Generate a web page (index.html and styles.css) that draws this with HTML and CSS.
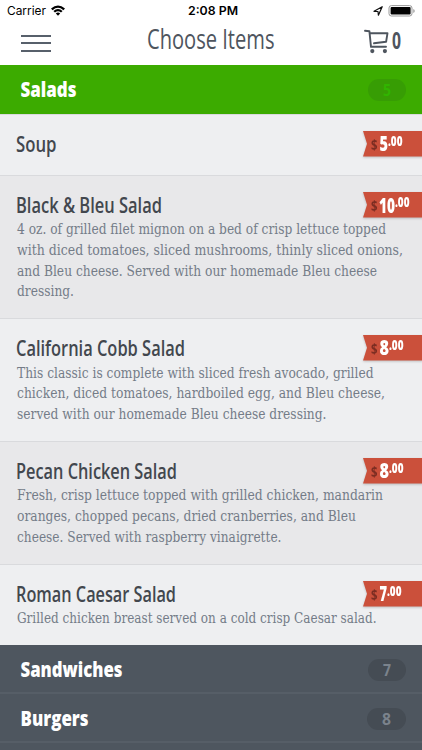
FILE: index.html
```html
<!DOCTYPE html>
<html lang="en">
<head>
<meta charset="utf-8">
<title>Choose Items</title>
<link rel="stylesheet" href="styles.css">
</head>
<body>
<header class="top">
  <div class="status">
    <div class="carrier"><svg width="47" height="20"><text x="0" y="15" textLength="39" lengthAdjust="spacingAndGlyphs">Carrier</text></svg><svg class="wifi" width="14" height="11" viewBox="0 0 14 11"><path d="M0 3.6Q7-2.8 14 3.6L12.4 5.2Q7 .4 1.6 5.2ZM2.4 6Q7 2 11.6 6L10 7.6Q7 5 4 7.6ZM4.8 8.4Q7 6.5 9.2 8.4L7 10.7Z"/></svg></div>
    <svg class="clock" width="50" height="20"><text x="0" y="15" textLength="50" lengthAdjust="spacingAndGlyphs">2:08 PM</text></svg>
    <svg class="power" width="44" height="12" viewBox="0 0 44 12"><path class="arrow" d="M1 6.3 9.2 1.7 5.4 10.2 5 6.5Z"/><rect class="shell" x="16" y=".6" width="23" height="10.4" rx="2.4"/><rect x="17.6" y="2" width="20" height="7.6" rx="1"/><path class="tip" d="M40.3 4v4q1.4-.6 1.4-2t-1.4-2z"/></svg>
  </div>
  <nav class="bar">
    <div class="menu"><i></i><i></i><i></i></div>
    <svg class="heading" width="130" height="45"><text x="0" y="29" textLength="127.5" lengthAdjust="spacingAndGlyphs">Choose Items</text></svg>
    <div class="cart"><svg width="26" height="25" viewBox="0 0 26 25"><path d="M1 1.8 5.4 2.2 7 17.8H22M6 4.2H23.5L22.1 12.8 10 14.3"/><circle cx="8.3" cy="22.1" r="2.1"/><circle cx="20.9" cy="22.1" r="2.1"/></svg><svg class="total" width="11" height="25"><text x="-1" y="19.5" textLength="9" lengthAdjust="spacingAndGlyphs">0</text></svg></div>
  </nav>
</header>
<main>
  <section class="category open"><svg width="110" height="48"><text x="-.5" y="32.3" textLength="56" lengthAdjust="spacingAndGlyphs">Salads</text></svg><span class="count"><svg width="8" height="22"><text x="0" y="16.8" textLength="8" lengthAdjust="spacingAndGlyphs">5</text></svg></span></section>
  <article class="item soup">
    <svg class="copy" width="390" height="60"><text class="name" x="-1" y="37.2" textLength="40.5" lengthAdjust="spacingAndGlyphs">Soup</text></svg>
    <svg class="price" width="60" height="28"><path d="M0 0H60V25.5H0L4 12.7Z"/><text class="sign" x="8" y="18.5" textLength="6.5" lengthAdjust="spacingAndGlyphs">$</text><text class="amount" x="16.5" y="20" textLength="8.5" lengthAdjust="spacingAndGlyphs">5</text><text class="cents" x="25" y="15" textLength="14.5" lengthAdjust="spacingAndGlyphs">.00</text></svg>
  </article>
  <article class="item alt bleu">
    <svg class="copy" width="390" height="140"><text class="name" x="-1" y="36.8" textLength="146" lengthAdjust="spacingAndGlyphs">Black &amp; Bleu Salad</text><g class="desc"><text x="0" y="58" textLength="369" lengthAdjust="spacingAndGlyphs">4 oz. of grilled filet mignon on a bed of crisp lettuce topped</text><text x="0" y="78.8" textLength="386" lengthAdjust="spacingAndGlyphs">with diced tomatoes, sliced mushrooms, thinly sliced onions,</text><text x="0" y="99.5" textLength="360" lengthAdjust="spacingAndGlyphs">and Bleu cheese. Served with our homemade Bleu cheese</text><text x="0" y="120.2" textLength="57" lengthAdjust="spacingAndGlyphs">dressing.</text></g></svg>
    <svg class="price" width="60" height="28"><path d="M0 0H60V25.5H0L4 12.7Z"/><text class="sign" x="8" y="18.5" textLength="6.5" lengthAdjust="spacingAndGlyphs">$</text><text class="amount" x="16" y="20.5" textLength="16" lengthAdjust="spacingAndGlyphs">10</text><text class="cents" x="32" y="15" textLength="14.5" lengthAdjust="spacingAndGlyphs">.00</text></svg>
  </article>
  <article class="item cobb">
    <svg class="copy" width="390" height="120"><text class="name" x="-1" y="36.8" textLength="169" lengthAdjust="spacingAndGlyphs">California Cobb Salad</text><g class="desc"><text x="0" y="58.5" textLength="356.5" lengthAdjust="spacingAndGlyphs">This classic is complete with sliced fresh avocado, grilled</text><text x="0" y="79.2" textLength="368" lengthAdjust="spacingAndGlyphs">chicken, diced tomatoes, hardboiled egg, and Bleu cheese,</text><text x="0" y="99.8" textLength="309.5" lengthAdjust="spacingAndGlyphs">served with our homemade Bleu cheese dressing.</text></g></svg>
    <svg class="price" width="60" height="28"><path d="M0 0H60V25.5H0L4 12.7Z"/><text class="sign" x="8" y="18.5" textLength="6.5" lengthAdjust="spacingAndGlyphs">$</text><text class="amount" x="16.5" y="20" textLength="9.5" lengthAdjust="spacingAndGlyphs">8</text><text class="cents" x="26" y="15" textLength="14.5" lengthAdjust="spacingAndGlyphs">.00</text></svg>
  </article>
  <article class="item alt pecan">
    <svg class="copy" width="390" height="120"><text class="name" x="-1" y="36.8" textLength="161" lengthAdjust="spacingAndGlyphs">Pecan Chicken Salad</text><g class="desc"><text x="0" y="58.3" textLength="366" lengthAdjust="spacingAndGlyphs">Fresh, crisp lettuce topped with grilled chicken, mandarin</text><text x="0" y="79" textLength="339" lengthAdjust="spacingAndGlyphs">oranges, chopped pecans, dried cranberries, and Bleu</text><text x="0" y="99.7" textLength="264.5" lengthAdjust="spacingAndGlyphs">cheese. Served with raspberry vinaigrette.</text></g></svg>
    <svg class="price" width="60" height="28"><path d="M0 0H60V25.5H0L4 12.7Z"/><text class="sign" x="8" y="18.5" textLength="6.5" lengthAdjust="spacingAndGlyphs">$</text><text class="amount" x="16.5" y="20" textLength="9.5" lengthAdjust="spacingAndGlyphs">8</text><text class="cents" x="26" y="15" textLength="14.5" lengthAdjust="spacingAndGlyphs">.00</text></svg>
  </article>
  <article class="item caesar">
    <svg class="copy" width="390" height="80"><text class="name" x="-1" y="36.8" textLength="160" lengthAdjust="spacingAndGlyphs">Roman Caesar Salad</text><g class="desc"><text x="0" y="58.3" textLength="359.5" lengthAdjust="spacingAndGlyphs">Grilled chicken breast served on a cold crisp Caesar salad.</text></g></svg>
    <svg class="price" width="60" height="28"><path d="M0 0H60V25.5H0L4 12.7Z"/><text class="sign" x="8" y="18.5" textLength="6.5" lengthAdjust="spacingAndGlyphs">$</text><text class="amount" x="16.5" y="20" textLength="7.5" lengthAdjust="spacingAndGlyphs">7</text><text class="cents" x="24" y="15" textLength="14.5" lengthAdjust="spacingAndGlyphs">.00</text></svg>
  </article>
  <section class="category"><svg width="110" height="47"><text x="-.5" y="32" textLength="102" lengthAdjust="spacingAndGlyphs">Sandwiches</text></svg><span class="count"><svg width="8" height="22"><text x="0" y="16.8" textLength="8" lengthAdjust="spacingAndGlyphs">7</text></svg></span></section>
  <section class="category"><svg width="110" height="47"><text x="-.5" y="32" textLength="68" lengthAdjust="spacingAndGlyphs">Burgers</text></svg><span class="count wide"><svg width="9" height="22"><text x="0" y="16.8" textLength="9" lengthAdjust="spacingAndGlyphs">8</text></svg></span></section>
</main>
</body>
</html>
```
FILE: styles.css
```css
* { box-sizing: border-box; }
html, body { margin: 0; }
body { width: 422px; height: 750px; background: #4e565f; font-family: "Open Sans", "Noto Sans", sans-serif; }
svg { display: block; flex: none; overflow: visible; }
.top { height: 65px; background: #fff; }
.status { height: 20px; display: grid; grid-template-columns: 181px 1fr 48px; padding: 0 1px 0 7px; font: 400 12px Inter, sans-serif; }
.carrier { display: flex; }
.wifi { margin: 5px 0 0 -3px; }
.clock { font-weight: 600; }
.power { margin-top: 5px; }
.arrow { fill: none; stroke: #111; stroke-width: 1.2; stroke-linejoin: round; }
.shell { fill: none; stroke: #999; stroke-width: 1; }
.tip { fill: #999; }
.bar { height: 45px; display: grid; grid-template-columns: 126px 1fr 58px; padding-left: 21px; }
.menu { width: 30px; padding-top: 15px; display: flex; flex-direction: column; gap: 5.3px; }
.menu i { height: 2px; background: #57606b; }
.heading { font-size: 26.5px; font-weight: 400; fill: #4e555e; }
.cart { display: flex; gap: 3px; padding-top: 9px; }
.cart path { fill: none; stroke: #4e555e; stroke-width: 1.9; stroke-linejoin: round; stroke-linecap: round; }
.cart circle { fill: #4e555e; }
.total { font-size: 22.5px; font-weight: 700; fill: #4e555e; }
.category { height: 49px; padding: 0 16px 0 21px; display: flex; justify-content: space-between; background: #4e565f; border-bottom: 2px solid #565e67; font-size: 21px; font-weight: 800; fill: #fff; }
.open { background: #3cab00; border: 0; }
.count { width: 38px; height: 22px; margin-top: 14px; border-radius: 11px; background: #454c54; display: flex; justify-content: center; font-size: 16.5px; font-weight: 700; fill: #7b838c; }
.wide { width: 39px; }
.open .count { background: #379d04; fill: #31b500; }
.item { display: flex; justify-content: space-between; padding-left: 17px; background: #eeeff1; border-top: 1px solid #d9dadd; }
.alt { background: #e8e8ea; }
.copy { margin-right: -44px; }
.price { margin-top: 16px; filter: drop-shadow(0 1px 1px #0003); }
.price path { fill: #cb503b; }
.soup { height: 61px; }
.bleu { height: 143px; }
.cobb { height: 123px; }
.pecan { height: 123px; }
.caesar { height: 81px; }
.name { font-size: 21.5px; font-weight: 600; fill: #42474e; }
.desc { font-family: "DejaVu Serif", serif; font-size: 14px; fill: #747c88; }
.sign { font-size: 14.5px; font-weight: 700; fill: #7c2d22; }
.amount { font-size: 21px; font-weight: 800; fill: #fff; }
.cents { font-size: 14px; font-weight: 800; fill: #fff; }
```
